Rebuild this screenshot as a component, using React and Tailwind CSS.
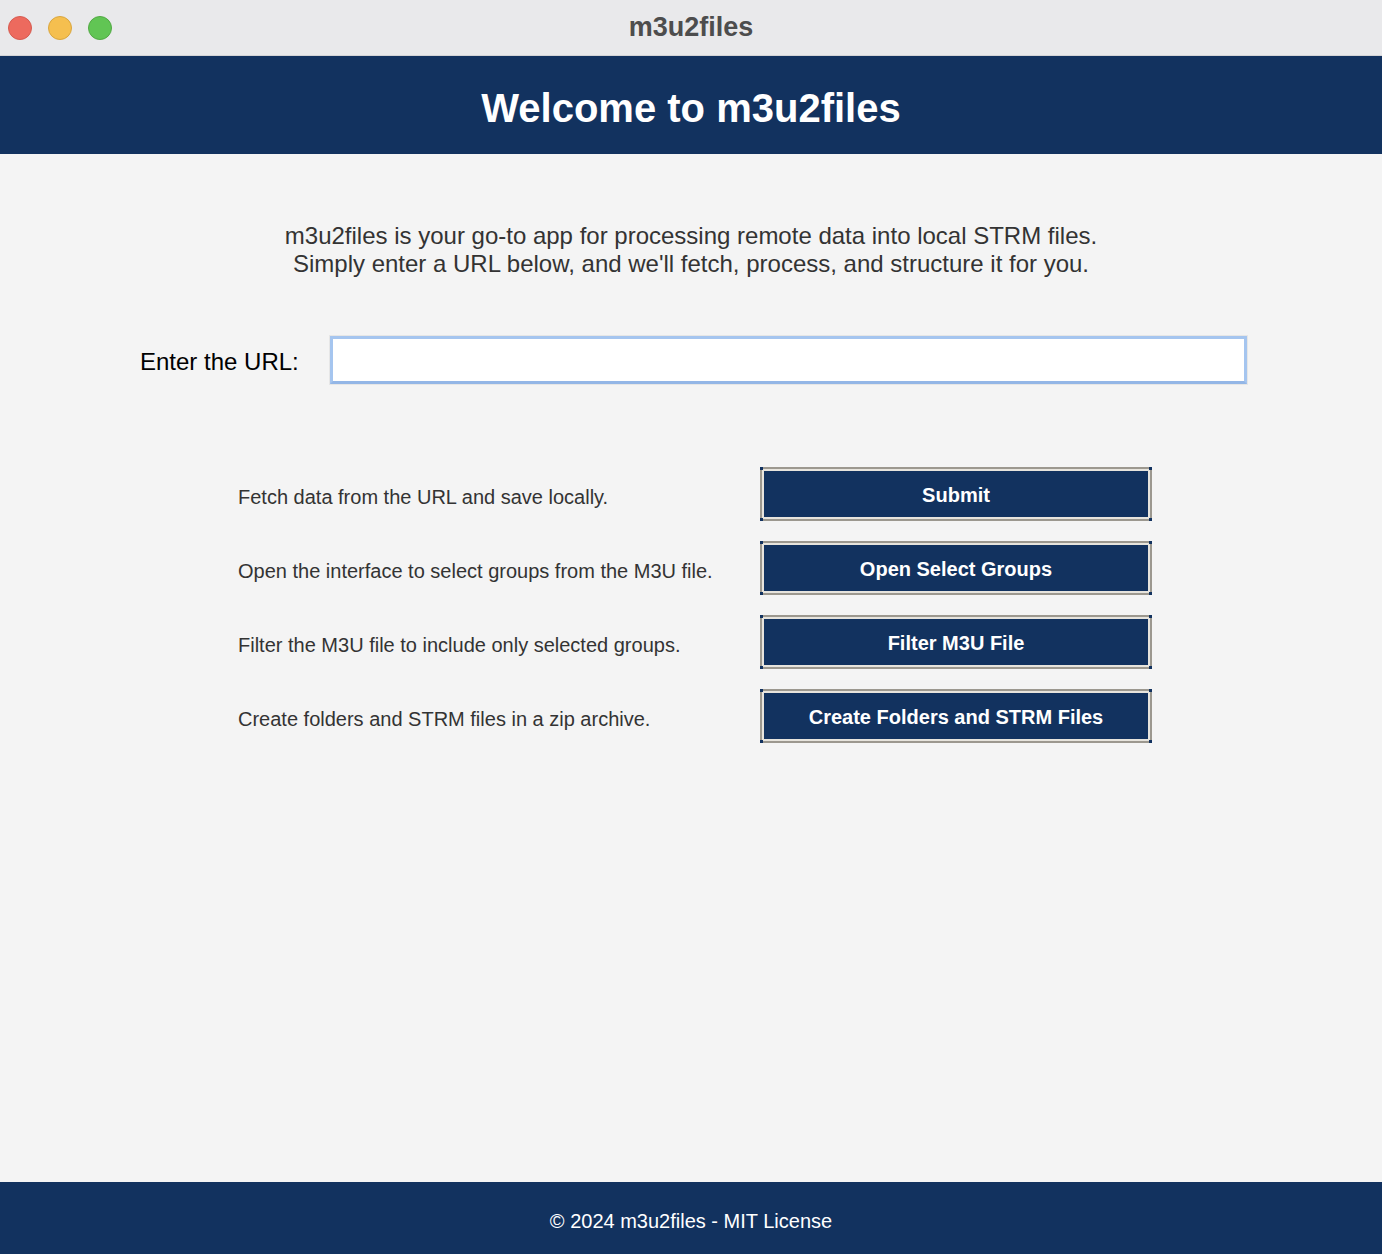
import React from "react";

const rows = [
  ["Fetch data from the URL and save locally.", "Submit"],
  ["Open the interface to select groups from the M3U file.", "Open Select Groups"],
  ["Filter the M3U file to include only selected groups.", "Filter M3U File"],
  ["Create folders and STRM files in a zip archive.", "Create Folders and STRM Files"],
];

function TkButton({ label }) {
  return (
    <div className="relative w-[392px] h-[54px] border-2 border-[#9c988f]">
      <div className="h-full w-full border-2 border-[#e7e4dd] bg-[#12325f] flex items-center justify-center pt-[2px]">
        <span className="text-white font-bold text-[20px] leading-none">{label}</span>
      </div>
      <span className="absolute -left-[2px] -top-[2px] w-[3px] h-[3px] bg-[#12325f]" />
      <span className="absolute -right-[2px] -top-[2px] w-[3px] h-[3px] bg-[#12325f]" />
      <span className="absolute -left-[2px] -bottom-[2px] w-[3px] h-[3px] bg-[#12325f]" />
      <span className="absolute -right-[2px] -bottom-[2px] w-[3px] h-[3px] bg-[#12325f]" />
    </div>
  );
}

export default function App() {
  return (
    <div
      className="w-[1382px] h-[1254px] flex flex-col bg-[#f4f4f4] overflow-hidden"
      style={{ fontFamily: '"Liberation Sans", Arial, sans-serif' }}
    >
      {/* Title bar */}
      <div className="relative h-[56px] shrink-0 bg-[#e9e9eb] flex items-center justify-center border-b border-[#d4d4d6]">
        <div className="absolute left-[8px] top-[16px] flex gap-[16px]">
          <span className="w-[24px] h-[24px] rounded-full bg-[#ed6a5e] border border-[#d65b50]" />
          <span className="w-[24px] h-[24px] rounded-full bg-[#f5bf4f] border border-[#d9a63f]" />
          <span className="w-[24px] h-[24px] rounded-full bg-[#61c554] border border-[#52a944]" />
        </div>
        <span className="text-[27px] font-bold text-[#4d4d4d] leading-none">m3u2files</span>
      </div>

      {/* Header */}
      <div className="h-[98px] shrink-0 bg-[#12325f] flex items-center justify-center pt-[6px]">
        <h1 className="text-white font-bold text-[40px] leading-none">Welcome to m3u2files</h1>
      </div>

      {/* Body */}
      <div className="flex-1 flex flex-col">
        <div className="pt-[68px] text-center text-[24px] leading-[28px] text-[#333333]">
          <p>m3u2files is your go-to app for processing remote data into local STRM files.</p>
          <p>Simply enter a URL below, and we'll fetch, process, and structure it for you.</p>
        </div>

        <div className="mt-[57px] pl-[140px] flex items-center">
          <label className="text-[24px] text-black w-[189px] pt-[3px]">Enter the URL:</label>
          <div className="p-px bg-[#e6e6e6]">
            <div className="w-[917px] h-[48px] border-[3px] border-[#a5c5ef] border-b-[#93b6e6] bg-white" />
          </div>
        </div>

        <div className="mt-[82px] pl-[238px] flex flex-col gap-[20px]">
          {rows.map(([desc, label]) => (
            <div key={label} className="flex items-center">
              <span className="w-[522px] text-[20px] text-[#333333] mt-[5px]">{desc}</span>
              <TkButton label={label} />
            </div>
          ))}
        </div>
      </div>

      {/* Footer */}
      <div className="h-[72px] shrink-0 bg-[#12325f] flex items-center justify-center pt-[6px]">
        <span className="text-white text-[20px] leading-none">© 2024 m3u2files - MIT License</span>
      </div>
    </div>
  );
}
